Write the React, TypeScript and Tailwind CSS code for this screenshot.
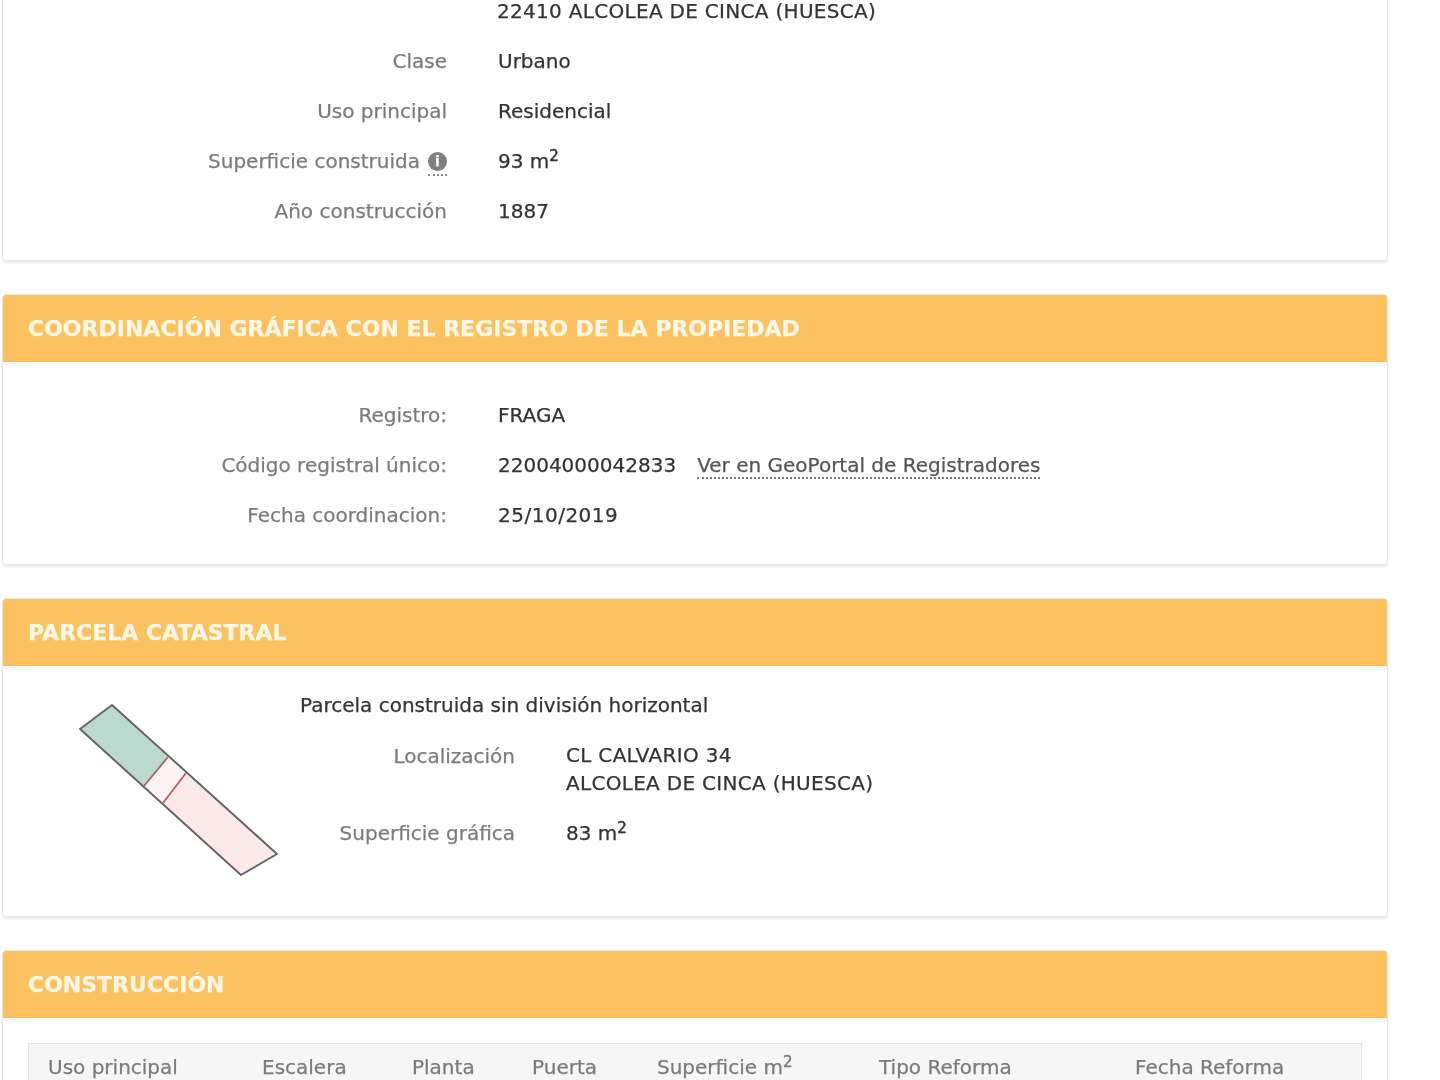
const FONT = "font-['DejaVu_Sans',Verdana,sans-serif]";

function Row({ label, children }: { label: React.ReactNode; children: React.ReactNode }) {
  return (
    <div className="flex min-h-[50px] items-center">
      <div className="flex w-[444px] shrink-0 items-center justify-end text-[#7b7b7b]">{label}</div>
      <div className="ml-[51px] text-[#333]">{children}</div>
    </div>
  );
}

function Sq() {
  return <sup className="relative -top-[7px] align-baseline text-[15px] [-webkit-text-stroke:0.5px]">2</sup>;
}

function Card({ title, children }: { title?: string; children: React.ReactNode }) {
  return (
    <section className="overflow-hidden rounded-[4px] border border-[#e6e6e6] bg-white shadow-[0_2px_2px_rgba(0,0,0,0.08)]">
      {title && (
        <h2 className="flex h-[67px] items-center bg-[#fcc260] pl-[25px] text-[22px] font-bold text-[#fff8e8]">
          {title}
        </h2>
      )}
      {children}
    </section>
  );
}

function InfoDot() {
  return (
    <span className="relative ml-2 inline-flex h-[19px] w-[19px] items-center justify-center rounded-full bg-[#7f7f7f] text-[14px] font-bold leading-none text-white">
      i
      <span className="absolute top-[22px] right-0 left-0 border-b-2 border-dotted border-[#888]" />
    </span>
  );
}

function Parcel() {
  return (
    <svg width="210" height="184" viewBox="74 700 210 184" className="shrink-0">
      <polygon points="112,706 168,758 144,787 80,730" fill="#bcd9d0" />
      <polygon points="168,758 186,774 163,804 144,787" fill="#fdf3f4" />
      <polygon points="186,774 277,855 241,876 163,804" fill="#fbe9e9" />
      <polygon points="112,706 277,855 241,876 80,730" fill="none" stroke="#666" strokeWidth="2" strokeLinejoin="round" />
      <line x1="144" y1="787" x2="168" y2="758" stroke="#a8606a" strokeWidth="1.8" />
      <line x1="163" y1="804" x2="186" y2="774" stroke="#b85a68" strokeWidth="1.8" />
    </svg>
  );
}

const COLUMNS = [
  { label: "Uso principal", w: "w-[214px]" },
  { label: "Escalera", w: "w-[150px]" },
  { label: "Planta", w: "w-[120px]" },
  { label: "Puerta", w: "w-[125px]" },
  { label: "Superficie m", w: "w-[222px]", m2: true },
  { label: "Tipo Reforma", w: "w-[256px]" },
  { label: "Fecha Reforma", w: "w-auto" },
];

export default function App() {
  return (
    <div className={`${FONT} h-[1080px] w-[1440px] overflow-hidden bg-white text-[20px] blur-[0.4px] [-webkit-text-stroke:0.25px]`}>
      <div className="-mt-[15px] flex w-[1388px] flex-col gap-[33px] pl-[2px]">
        <Card>
          <div className="pb-[24px]">
            <div className="flex min-h-[50px] items-center pl-[494px] tracking-[0.3px] text-[#333]">22410 ALCOLEA DE CINCA (HUESCA)</div>
            <Row label="Clase">Urbano</Row>
            <Row label="Uso principal">Residencial</Row>
            <Row label={<>Superficie construida<InfoDot /></>}>93 m<Sq /></Row>
            <Row label="Año construcción">1887</Row>
          </div>
        </Card>

        <Card title="COORDINACIÓN GRÁFICA CON EL REGISTRO DE LA PROPIEDAD">
          <div className="pt-[28px] pb-[24px]">
            <Row label="Registro:">FRAGA</Row>
            <Row label="Código registral único:">
              22004000042833
              <span className="ml-[21px] border-b-2 border-dotted border-[#777] text-[#555]">Ver en GeoPortal de Registradores</span>
            </Row>
            <Row label="Fecha coordinacion:"><span className="tracking-[0.5px]">25/10/2019</span></Row>
          </div>
        </Card>

        <Card title="PARCELA CATASTRAL">
          <div className="flex h-[250px] pt-[33px] pl-[71px]">
            <Parcel />
            <div className="ml-[16px] flex flex-col text-[#333]">
              <p className="-mt-[19px] flex h-[50px] items-center">Parcela construida sin división horizontal</p>
              <div className="flex">
                <div className="w-[215px] shrink-0 pt-[11px] text-right text-[#7b7b7b]">Localización</div>
                <div className="ml-[51px] pt-[11px] leading-[28px] tracking-[0.3px]">
                  CL CALVARIO 34
                  <br />
                  ALCOLEA DE CINCA (HUESCA)
                </div>
              </div>
              <div className="mt-[11px] flex h-[50px] items-center">
                <div className="w-[215px] shrink-0 text-right text-[#7b7b7b]">Superficie gráfica</div>
                <div className="ml-[51px]">83 m<Sq /></div>
              </div>
            </div>
          </div>
        </Card>

        <Card title="CONSTRUCCIÓN">
          <div className="px-[25px] pt-[25px] pb-[20px]">
            <div className="flex h-[48px] items-center border border-[#e4e4e4] bg-[#f6f6f6] pl-[19px] text-[#7b7b7b]">
              {COLUMNS.map(c => (
                <div key={c.label} className={`${c.w} shrink-0`}>
                  {c.label}{c.m2 && <Sq />}
                </div>
              ))}
            </div>
          </div>
        </Card>
      </div>
    </div>
  );
}
